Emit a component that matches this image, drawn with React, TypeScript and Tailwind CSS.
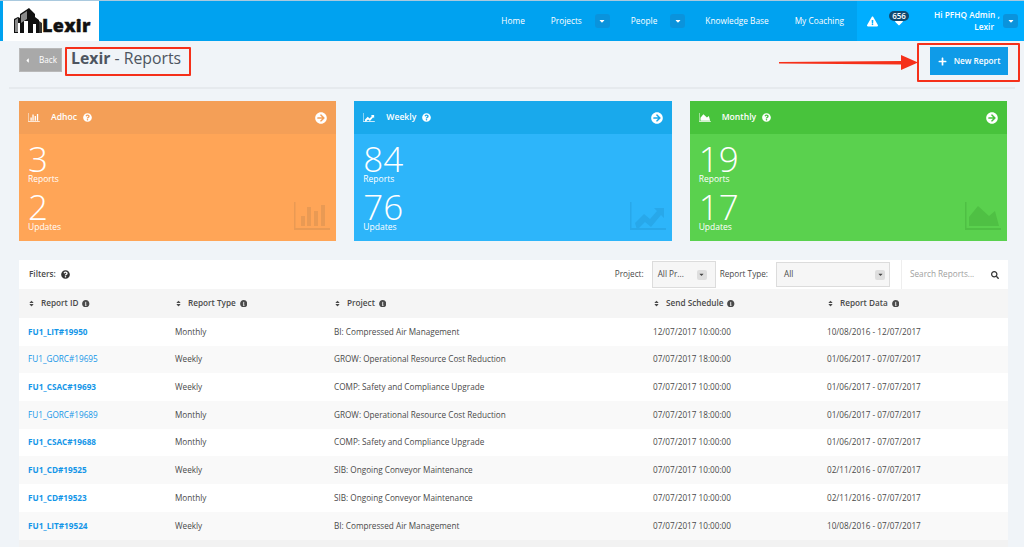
import { FaArrowCircleRight, FaCaretDown, FaCaretLeft, FaExclamationTriangle, FaInfoCircle, FaPlus, FaQuestionCircle, FaSearch, FaSort, FaHeart } from "react-icons/fa";

type Kind = "bar" | "line" | "area";

const cards: { kind: Kind; title: string; reports: string; updates: string; head: string; body: string; mark: string }[] = [
  { kind: "bar", title: "Adhoc", reports: "3", updates: "2", head: "bg-[#f49f57]", body: "bg-[#ffa557]", mark: "text-[#e99a54]" },
  { kind: "line", title: "Weekly", reports: "84", updates: "76", head: "bg-[#19a9ec]", body: "bg-[#2db5fa]", mark: "text-[#28a8ea]" },
  { kind: "area", title: "Monthly", reports: "19", updates: "17", head: "bg-[#48c33c]", body: "bg-[#5ad14e]", mark: "text-[#4fc044]" },
];

const rows = [
  ["FU1_LIT#19950", "Monthly", "BI: Compressed Air Management", "12/07/2017 10:00:00", "10/08/2016 - 12/07/2017", true],
  ["FU1_GORC#19695", "Weekly", "GROW: Operational Resource Cost Reduction", "07/07/2017 18:00:00", "01/06/2017 - 07/07/2017", false],
  ["FU1_CSAC#19693", "Weekly", "COMP: Safety and Compliance Upgrade", "07/07/2017 10:00:00", "01/06/2017 - 07/07/2017", true],
  ["FU1_GORC#19689", "Monthly", "GROW: Operational Resource Cost Reduction", "07/07/2017 18:00:00", "01/06/2017 - 07/07/2017", false],
  ["FU1_CSAC#19688", "Monthly", "COMP: Safety and Compliance Upgrade", "07/07/2017 10:00:00", "01/06/2017 - 07/07/2017", true],
  ["FU1_CD#19525", "Weekly", "SIB: Ongoing Conveyor Maintenance", "07/07/2017 10:00:00", "02/11/2016 - 07/07/2017", true],
  ["FU1_CD#19523", "Monthly", "SIB: Ongoing Conveyor Maintenance", "07/07/2017 10:00:00", "02/11/2016 - 07/07/2017", true],
  ["FU1_LIT#19524", "Weekly", "BI: Compressed Air Management", "07/07/2017 10:00:00", "10/08/2016 - 07/07/2017", true],
] as const;

const columns = ["Report ID", "Report Type", "Project", "Send Schedule", "Report Data"];

function ChartGlyph({ kind, className }: { kind: Kind; className?: string }) {
  return (
    <svg viewBox="0 0 36 28" className={className} fill="currentColor">
      <path d="M0 0h1.5v26H36v2H0z" />
      {kind === "bar" && <path d="M7 14h4v10H7zM13 5h4v19h-4zM20 9h4v15h-4zM27 3h4v21h-4z" />}
      {kind === "line" && <path d="M5 21l9-9 6 5 7-8-3-3h10v10l-3-3-10 12-6-5-8 8z" />}
      {kind === "area" && <path d="M4 24V15l9-11 11 10 6-5 4 15z" />}
    </svg>
  );
}

function Chip() {
  return (
    <span className="flex h-[14px] w-[15px] items-center justify-center rounded-[3px] bg-[#0a93dc] text-white">
      <FaCaretDown className="text-[8px]" />
    </span>
  );
}

function Select({ label, className }: { label: string; className: string }) {
  return (
    <div className={`flex items-center justify-between border border-[#dcdcdc] bg-[#f6f6f6] ${className}`}>
      <span>{label}</span>
      <span className="flex h-[10px] w-[10px] items-center justify-center rounded-[2px] bg-[#dedede] text-[#444]">
        <FaCaretDown className="text-[7px]" />
      </span>
    </div>
  );
}

export default function App() {
  return (
    <div className="relative flex h-[547px] w-[1024px] flex-col overflow-hidden bg-[#f0f4f8] text-[8.2px] text-[#4a4a4a] [font-family:'Open_Sans',sans-serif]">
      <div className="h-px shrink-0 bg-[#a9c9de]" />
      <header className="flex h-[40px] shrink-0 bg-[#00a2f0] pl-[3px] text-white">
        <div className="flex w-[96px] items-end bg-white pb-[8px] pl-[11px] text-[#111]">
          <svg viewBox="0 0 29 25" className="h-[25px] w-[29px]">
            <path d="M0 25V11l4-2 2 1V6l9-6 6 6v3l4 3v13h-3v-9h-3v9h-5V13h-4v12H6V15H4v10z" fill="#111" />
            <path d="M1 24V12l3-2v14zM7 15V7l6-4v8z" fill="#8a8a8a" />
            <path d="M25 25V13l3 2v10z" fill="#333" />
          </svg>
          <span className="mb-[-1px] ml-[-1px] text-[18px] leading-none font-extrabold tracking-[0.3px] [-webkit-text-stroke:0.4px_#111]">Lexir</span>
        </div>
        <nav className="ml-auto flex items-center text-[8.3px]">
          <span>Home</span>
          <span className="ml-[26px]">Projects</span>
          <span className="ml-[13px]"><Chip /></span>
          <span className="ml-[21px]">People</span>
          <span className="ml-[13px]"><Chip /></span>
          <span className="ml-[20px]">Knowledge Base</span>
          <span className="ml-[26px]">My Coaching</span>
        </nav>
        <div className="ml-[13px] flex w-[167px] items-center bg-[#00aeff] pl-[10px]">
          <FaExclamationTriangle className="text-[11px]" />
          <div className="relative ml-[11px] flex h-[22px] w-[20px] justify-center">
            <FaHeart className="mt-[8px] text-[8px]" />
            <span className="absolute top-[1px] h-[10px] w-[20px] rounded-full bg-[#114a70] text-center text-[8px] leading-[10px] font-semibold">656</span>
          </div>
          <div className="ml-[25px] w-[60px] text-right text-[8.3px] leading-[12px] font-semibold">
            <div className="whitespace-nowrap">Hi PFHQ Admin ,</div>
            <div>Lexir</div>
          </div>
          <span className="ml-[9px]"><Chip /></span>
        </div>
      </header>

      <div className="mx-[9px] flex h-[48px] shrink-0 items-start border-b-2 border-[#e6eaee] pr-[7px] pl-[10px]">
        <button className="mt-[7px] flex h-[24px] w-[43px] items-center gap-[8px] border border-[#b9b9b9] bg-[#a9a9a9] pl-[4px] text-[8.2px] text-white">
          <FaCaretLeft className="text-[7px]" />
          Back
        </button>
        <h1 className="mt-[4px] ml-[9px] text-[15.8px] leading-[26px] text-[#4d5560]">
          <b className="font-bold">Lexir</b> - Reports
        </h1>
        <button className="mt-[6px] ml-auto flex h-[28px] w-[78px] items-center justify-center gap-[7px] bg-[#0f9be8] text-[8.2px] font-semibold text-white">
          <FaPlus className="text-[9px]" />
          New Report
        </button>
      </div>

      <section className="mt-[12px] mr-[17px] ml-[19px] grid shrink-0 grid-cols-3 gap-[18px]">
        {cards.map((c) => (
          <div key={c.title} className={`relative h-[140px] ${c.body} text-white`}>
            <div className={`flex h-[33px] items-center px-[9px] ${c.head}`}>
              <ChartGlyph kind={c.kind} className="h-[9px] w-[12px]" />
              <span className="ml-[11px] text-[8.6px] font-semibold">{c.title}</span>
              <FaQuestionCircle className="ml-[6px] text-[9px]" />
              <FaArrowCircleRight className="ml-auto text-[12px]" />
            </div>
            <div className="pt-[10px] pl-[9px]">
              <div className="text-[35px] leading-[30px] font-light">{c.reports}</div>
              <div className="text-[8.5px] leading-[10px]">Reports</div>
              <div className="mt-[7px] text-[35px] leading-[31px] font-light">{c.updates}</div>
              <div className="text-[8.5px] leading-[10px]">Updates</div>
            </div>
            <ChartGlyph kind={c.kind} className={`absolute right-[6px] bottom-[11px] h-[28px] w-[36px] ${c.mark}`} />
          </div>
        ))}
      </section>

      <section className="mt-[19px] mr-[16px] ml-[19px] min-h-0 flex-1 bg-white">
        <div className="flex h-[29px] items-center pl-[10px]">
          <span className="font-semibold">Filters:</span>
          <FaQuestionCircle className="ml-[5px] text-[9px] text-[#333]" />
          <span className="ml-auto">Project:</span>
          <Select label="All Pr..." className="ml-[8px] h-[27px] w-[64px] pr-[8px] pl-[5px]" />
          <span className="ml-[4px]">Report Type:</span>
          <Select label="All" className="ml-[8px] h-[25px] w-[114px] pr-[4px] pl-[7px]" />
          <div className="ml-[11px] flex h-[29px] w-[107px] items-center border-l border-[#eee] pr-[9px] pl-[8px]">
            <span className="text-[#a0a0a0]">Search Reports...</span>
            <FaSearch className="ml-auto text-[8px] text-[#333]" />
          </div>
        </div>

        <div className="grid h-[29px] grid-cols-[147px_159px_319px_174px_1fr] items-center bg-[#f5f5f5] pl-[9px] font-semibold">
          {columns.map((name) => (
            <div key={name} className="flex items-center">
              <FaSort className="text-[7px]" />
              <span className="ml-[6px]">{name}</span>
              <FaInfoCircle className="ml-[4px] text-[7.5px]" />
            </div>
          ))}
        </div>

        {rows.map((r, i) => (
          <div key={r[0]} className={`grid h-[27.7px] grid-cols-[147px_159px_319px_174px_1fr] items-center pl-[9px] ${i % 2 ? "bg-[#f9f9f9]" : "bg-white"}`}>
            <a className={`text-[#1496e8] ${r[5] ? "font-bold" : ""}`}>{r[0]}</a>
            <span>{r[1]}</span>
            <span>{r[2]}</span>
            <span>{r[3]}</span>
            <span>{r[4]}</span>
          </div>
        ))}
        <div className="h-[8px] bg-[#f2f2f2]" />
      </section>

      {/* red annotations drawn on top of the page */}
      <div className="absolute top-[47px] left-[65px] h-[29px] w-[126px] rounded-[1px] border-2 border-[#f5301a]" />
      <div className="absolute top-[43px] left-[917px] h-[39px] w-[103px] rounded-[1px] border-2 border-[#f5301a]" />
      <svg className="absolute top-[54px] left-[779px] h-[18px] w-[140px]" viewBox="0 0 140 18" fill="#f5301a">
        <path d="M0 8L122 7V1L139 8.5L122 16V10.5L0 9.5z" />
      </svg>
    </div>
  );
}
